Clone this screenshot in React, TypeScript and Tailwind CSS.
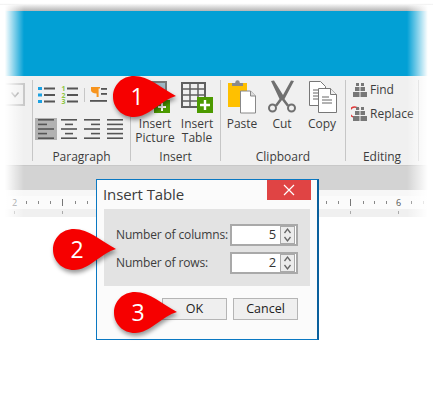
import React from "react";

const F = '"Open Sans","Noto Sans",sans-serif';

function Lines({ rows }: { rows: [number, number][] }) {
  return (
    <svg width="16" height="22" viewBox="0 0 16 22">
      {rows.map(([a, b], i) => (
        <rect key={i} x={a} y={1 + i * 4.6} width={b} height="1.6" fill="#555" />
      ))}
    </svg>
  );
}

function Bullets() {
  return (
    <svg width="17" height="18" viewBox="0 0 17 18">
      {[1, 7.5, 14].map((y) => (
        <g key={y}>
          <rect x="0" y={y} width="4" height="3" fill="#1ba1e2" />
          <rect x="6" y={y + 0.5} width="11" height="2" fill="#555" />
        </g>
      ))}
    </svg>
  );
}

function Numbers() {
  return (
    <div className="w-[17px] h-[18px] flex justify-between items-start">
      <div className="w-[5px] flex flex-col text-[7px] leading-[6.500px] font-bold text-[#8cc63f] text-center">
        <span>1</span>
        <span>2</span>
        <span>3</span>
      </div>
      <svg width="11" height="18" viewBox="0 0 11 18">
        {[1.5, 8, 14.5].map((y) => (
          <rect key={y} x="0" y={y} width="11" height="2" fill="#555" />
        ))}
      </svg>
    </div>
  );
}

function Pilcrow() {
  return (
    <svg width="17" height="18" viewBox="0 0 17 18">
      <path d="M1 1h9v1.500H8.600V11H6.600V7.500C3 7.500 1 6 1 4.200 1 2.600 1 1 1 1z" fill="#f7941d" />
      <rect x="11" y="2" width="6" height="1.800" fill="#555" />
      <rect x="11" y="7" width="6" height="1.800" fill="#555" />
      <rect x="0" y="14" width="17" height="1.800" fill="#555" />
    </svg>
  );
}

function PictureIcon() {
  return (
    <svg width="42" height="34" viewBox="0 0 42 34">
      <rect x="8" y="2" width="24" height="24" fill="#9fb8c4" stroke="#777" strokeWidth="2" />
      <rect x="20" y="20" width="16" height="13" fill="#4c9a00" />
      <path d="M28 23v8M24 27h8" stroke="#fff" strokeWidth="2" />
    </svg>
  );
}

function TableIcon() {
  return (
    <svg width="42" height="34" viewBox="0 0 42 34">
      <rect x="6" y="3" width="23" height="24" fill="none" stroke="#5f5f5f" strokeWidth="2" />
      <path d="M6 9h23M6 15h23M6 21h23M14 3v24M22 3v24" stroke="#5f5f5f" strokeWidth="1.500" />
      <rect x="21" y="17" width="16" height="16" fill="#4c9a00" />
      <path d="M29 20v10M24 25h10" stroke="#fff" strokeWidth="2.400" />
    </svg>
  );
}

function PasteIcon() {
  return (
    <svg width="40" height="34" viewBox="0 0 40 34">
      <rect x="6" y="3" width="19" height="24" fill="#ffc000" />
      <path d="M10 3h11v3H10z" fill="#8a8a8a" />
      <circle cx="15.500" cy="2.500" r="2.200" fill="#8a8a8a" />
      <path d="M18.500 11h10l5 5v17h-15z" fill="#fff" stroke="#888" strokeWidth="1" />
      <path d="M28.500 11v5h5" fill="#ddd" stroke="#888" strokeWidth="1" />
    </svg>
  );
}

function CutIcon() {
  return (
    <svg width="40" height="34" viewBox="0 0 40 34">
      <path d="M9 1l3-0.500 9 14.500 8-14.500 3 0.500-9.500 18 4.500 6-2 1.500-5-6.500-5 6.500-2-1.500 4.500-6z" fill="#707070" />
      <circle cx="10.500" cy="28" r="3.500" fill="none" stroke="#707070" strokeWidth="2" />
      <circle cx="29.500" cy="28" r="3.500" fill="none" stroke="#707070" strokeWidth="2" />
    </svg>
  );
}

function CopyIcon() {
  return (
    <svg width="40" height="34" viewBox="0 0 40 34">
      <path d="M7.500 1.500h11l5 5v19h-16z" fill="#fff" stroke="#777" />
      <path d="M11 10h6M11 13h6M11 16h6M11 19h6" stroke="#666" />
      <path d="M16.500 8.500h12l6 6v18h-18z" fill="#fff" stroke="#777" />
      <path d="M28.500 8.500v6h6" fill="#eee" stroke="#777" />
      <path d="M20 17h7M20 20h10M20 23h10" stroke="#666" />
    </svg>
  );
}

function Binoculars({ arrow }: { arrow?: boolean }) {
  return (
    <svg width="18" height="16" viewBox="0 0 18 16">
      {arrow && <path d="M8 3.500A5 5 0 1 0 3 11" fill="none" stroke="#e03a3a" strokeWidth="1.500" />}
      <g fill="#777">
        <rect x="5" y="1" width="3" height="3" />
        <rect x="10" y="1" width="3" height="3" />
        <rect x="4" y="5" width="4.500" height="4" />
        <rect x="9.500" y="5" width="4.500" height="4" />
        <rect x="2" y="10" width="6.500" height="5" />
        <rect x="9.500" y="10" width="6.500" height="5" />
      </g>
    </svg>
  );
}

function BigButton({ icon, lines }: { icon: React.ReactNode; lines: string[] }) {
  return (
    <div className="flex flex-col items-center shrink-0 w-[40px] text-[12px] leading-[14px] text-[#3c3c3c]">
      <div className="h-[34px] flex items-end">{icon}</div>
      <div className="mt-[3px] text-center whitespace-nowrap">
        {lines.map((l) => (
          <div key={l}>{l}</div>
        ))}
      </div>
    </div>
  );
}

function Group({ label, w, children }: { label: string; w: string; children: React.ReactNode }) {
  return (
    <div className={`${w} shrink-0 h-[81px] flex flex-col border-r border-[#c6c6c6]`}>
      <div className="h-[70px] shrink-0">{children}</div>
      <div className="h-[11px] text-center text-[12px] leading-[14px] text-[#3c3c3c]">{label}</div>
    </div>
  );
}

function Callout({ n, pos }: { n: string; pos: string }) {
  return (
    <div className={`absolute ${pos} w-[64px] h-[42px]`}>
      <svg width="64" height="42" viewBox="0 0 64 42" className="absolute inset-0 overflow-visible drop-shadow-[1px_3px_2px_rgba(0,0,0,0.4)]">
        <path d="M21 0C36 0 48 12 63 20 48 24 36 41 21 41 9 41 0 32 0 20.500 0 9 9 0 21 0Z" fill="#f60000" />
      </svg>
      <div className="absolute left-[4px] w-[40px] top-[4px] text-center text-white text-[23px] leading-[32px]">{n}</div>
    </div>
  );
}

function Spin({ value }: { value: string }) {
  return (
    <div className="w-[68px] h-[22px] border-2 border-[#a9a9a9] bg-white flex items-center justify-end text-[13px] text-[#333]">
      <span className="mr-[4px]">{value}</span>
      <div className="w-[15px] h-[18px] border border-[#a9a9a9] bg-[#ececec] mr-[1px] flex items-center justify-center">
        <svg width="9" height="16" viewBox="0 0 9 16">
          <path d="M1.500 6L4.500 2l3 4M1.500 10l3 4 3-4" fill="none" stroke="#666" strokeWidth="1.300" />
        </svg>
      </div>
    </div>
  );
}

const ticks = [26, 38, 50, 75, 87, 99, 326, 338, 363, 374, 386, 411, 423];

export default function App() {
  return (
    <div className="relative w-[433px] h-[402px] bg-white overflow-hidden flex flex-col" style={{ fontFamily: F }}>
      <div className="h-[11px] shrink-0 bg-linear-to-b from-white from-[30%] to-[#b5b5b5]" />
      <div className="h-[65px] shrink-0 bg-[#02a0d5]" />
      <div className="h-[90px] shrink-0 bg-[#f0f0f0] border-b border-[#c8c8c8] flex pt-[4px]">
        <div className="w-[33px] shrink-0 h-[81px] border-r border-[#c6c6c6] pt-[3px]">
          <div className="w-[25px] h-[23px] border-2 border-[#c8c8c8] flex items-center justify-end pr-[3px]">
            <svg width="10" height="8" viewBox="0 0 10 8">
              <path d="M1.500 1.500L5 5.500l3.500-4" fill="none" stroke="#999" strokeWidth="1.500" />
            </svg>
          </div>
        </div>
        <Group label="Paragraph" w="w-[98px]">
          <div className="pl-[5px] pt-[6px] flex gap-[6px] items-center">
            <Bullets />
            <Numbers />
            <div className="w-px h-[14px] bg-[#c6c6c6]" />
            <div className="-ml-[1px]"><Pilcrow /></div>
          </div>
          <div className="pl-[2px] mt-[14px] flex items-center">
            <div className="w-[22px] h-[22px] bg-[#b2b2b2] flex justify-center items-center">
              <Lines rows={[[0, 16], [0, 9], [0, 16], [0, 9], [0, 16]]} />
            </div>
            <div className="ml-[4px] flex gap-[7px]">
              <Lines rows={[[0, 16], [4, 8], [0, 16], [4, 8], [0, 16]]} />
              <Lines rows={[[0, 16], [7, 9], [0, 16], [7, 9], [0, 16]]} />
              <Lines rows={[[0, 16], [0, 16], [0, 16], [0, 16], [0, 16]]} />
            </div>
          </div>
        </Group>
        <Group label="Insert" w="w-[90px]">
          <div className="flex pl-[4px] gap-[2px]">
            <BigButton icon={<PictureIcon />} lines={["Insert", "Picture"]} />
            <BigButton icon={<TableIcon />} lines={["Insert", "Table"]} />
          </div>
        </Group>
        <Group label="Clipboard" w="w-[125px]">
          <div className="flex pl-[1px]">
            <BigButton icon={<PasteIcon />} lines={["Paste"]} />
            <BigButton icon={<CutIcon />} lines={["Cut"]} />
            <BigButton icon={<CopyIcon />} lines={["Copy"]} />
          </div>
        </Group>
        <Group label="Editing" w="w-[73px]">
          <div className="pl-[5px] pt-[2px] flex flex-col gap-[8px] text-[12px] leading-[16px] text-[#3c3c3c]">
            <div className="flex items-center gap-[1px]"><Binoculars />Find</div>
            <div className="flex items-center gap-[1px]"><Binoculars arrow />Replace</div>
          </div>
        </Group>
      </div>
      <div className="h-[24px] shrink-0 bg-[#d3d3d3]" />
      <div className="relative h-[27px] shrink-0 bg-[#f7f7f7]">
        <svg width="433" height="27" viewBox="0 0 433 27" className="absolute inset-0">
          <rect x="0" y="19" width="433" height="8" fill="#f0f0f0" />
          <rect x="0" y="6" width="433" height="13" fill="#fbfbfb" />
          {ticks.map((x) => (
            <rect key={x} x={x} y="11" width="1" height="3" fill="#888" />
          ))}
          {[62, 350].map((x) => (
            <rect key={x} x={x} y="9" width="1" height="7" fill="#777" />
          ))}
          {[14, 62, 350, 398].map((x) => (
            <rect key={x} x={x} y="21" width="1" height="3" fill="#aaa" />
          ))}
        </svg>
        <span className="absolute left-[12px] top-[6px] text-[9px] leading-[14px] text-[#666]">2</span>
        <span className="absolute left-[396px] top-[6px] text-[9px] leading-[14px] text-[#555]">6</span>
      </div>
      <div className="flex-1 bg-white" />

      <div className="absolute left-0 top-[5px] h-[212px] w-[24px] bg-linear-to-r from-white from-[20%] to-transparent" />
      <div className="absolute right-0 top-[5px] h-[212px] w-[26px] bg-linear-to-l from-white from-[20%] to-transparent" />

      <div className="absolute left-[96px] top-[179px] w-[223px] h-[161px] bg-[#fbfbfb] border border-[#0a78c2] border-r-2 border-r-[#0a5f9c] flex flex-col px-[7px]">
        <div className="absolute right-[6px] top-0 w-[44px] h-[20px] bg-[#e04444] flex items-center justify-center">
          <svg width="12" height="12" viewBox="0 0 12 12">
            <path d="M1 1l10 10M11 1L1 11" stroke="#fff" strokeWidth="1.200" />
          </svg>
        </div>
        <div className="h-[29px] flex items-center text-[15px] tracking-[-0.1px] -ml-[1px] text-[#3c3c3c]">Insert Table</div>
        <div className="w-[206px] h-[77px] bg-[#e3e3e3] flex flex-col gap-[6px] pt-[15px] pl-[12px] text-[12px] tracking-[-0.15px] text-[#3c3c3c] whitespace-nowrap">
          <div className="flex items-center w-[182px] justify-between">
            <span>Number of columns:</span>
            <Spin value="5" />
          </div>
          <div className="flex items-center w-[182px] justify-between">
            <span>Number of rows:</span>
            <Spin value="2" />
          </div>
        </div>
        <div className="flex justify-end gap-[6px] mt-[12px] mr-[12px] text-[12.500px] text-[#222]">
          <div className="w-[65px] h-[22px] border border-[#b5b5b5] bg-[#efefef] flex items-center justify-center">OK</div>
          <div className="w-[65px] h-[22px] border border-[#b5b5b5] bg-[#efefef] flex items-center justify-center">Cancel</div>
        </div>
      </div>

      <Callout n="1" pos="left-[113px] top-[76px]" />
      <Callout n="2" pos="left-[53px] top-[229px]" />
      <Callout n="3" pos="left-[114px] top-[292px]" />
    </div>
  );
}
